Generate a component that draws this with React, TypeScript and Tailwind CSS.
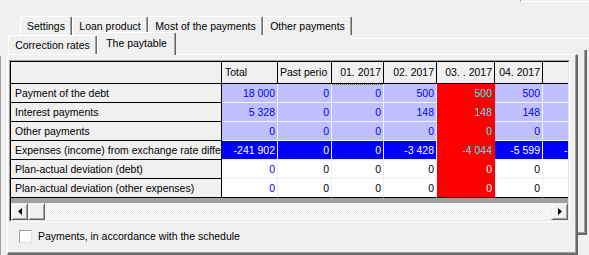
import React from "react";

type Kind = "lav" | "blue" | "white";

interface Row {
  label: string;
  total: string;
  vals: string[];
  partial?: string;
  kind: Kind;
}

const rows: Row[] = [
  { label: "Payment of the debt", total: "18 000", vals: ["0", "0", "500", "500", "500"], kind: "lav" },
  { label: "Interest payments", total: "5 328", vals: ["0", "0", "148", "148", "148"], kind: "lav" },
  { label: "Other payments", total: "0", vals: ["0", "0", "0", "0", "0"], kind: "lav" },
  {
    label: "Expenses (income) from exchange rate differences",
    total: "-241 902",
    vals: ["0", "0", "-3 428", "-4 044", "-5 599"],
    partial: "-5 599",
    kind: "blue",
  },
  { label: "Plan-actual deviation (debt)", total: "0", vals: ["0", "0", "0", "0", "0"], kind: "white" },
  { label: "Plan-actual deviation (other expenses)", total: "0", vals: ["0", "0", "0", "0", "0"], kind: "white" },
];

// widths of Past perio, 01, 02, 03, 04 (each includes its right grid line)
const colW = ["w-[54px]", "w-[52px]", "w-[53px]", "w-[58px]", "w-[48px]"];
const RED = 3;

const headers = [
  { text: "Past perio", cls: "justify-start pl-[2px]" },
  { text: "01. 2017", cls: "justify-end pr-[2px]" },
  { text: "02. 2017", cls: "justify-end pr-[2px]" },
  { text: "03. . 2017", cls: "justify-end pr-[2px]" },
  { text: "04. 2017", cls: "justify-end pr-[2px]" },
];

const fill = (kind: Kind, red: boolean, total: boolean) => {
  if (red) return kind === "white" ? "bg-[#ff0000] border-[#ff0000] text-white" : "bg-[#ff0000] border-[#ff0000] text-[#00ffff]";
  if (kind === "lav") return "bg-[#c0c0ff] border-[#f4f4ff] text-[#0000ff]";
  if (kind === "blue") return "bg-[#0000ff] border-[#f0f0f0] text-white";
  return total ? "bg-white border-[#f0f0f0] text-[#0000ff]" : "bg-white border-[#f0f0f0] text-black";
};

const Tab = ({ label, w, selected }: { label: string; w: string; selected?: boolean }) => (
  <div
    className={`${w} flex items-center justify-center rounded-t-[2px] border-l border-t border-white border-r border-r-[#696969] shadow-[inset_-1px_0_0_#a0a0a0] bg-[#f0f0f0] ${
      selected ? "relative z-10 h-[23px] -mb-px pb-[2px]" : "h-[19px]"
    }`}
  >
    {label}
  </div>
);

const Arrow = ({ dir }: { dir: "left" | "right" }) => (
  <div className="w-[17px] h-[17px] flex items-center justify-center bg-[#f0f0f0] border border-[#f0f0f0] border-r-[#696969] border-b-[#696969] shadow-[inset_1px_1px_0_#fff,inset_-1px_-1px_0_#a0a0a0]">
    <svg width="4" height="7" viewBox="0 0 4 7">
      {dir === "left" ? <path d="M4 0 L0 3.5 L4 7 Z" fill="#000" /> : <path d="M0 0 L4 3.5 L0 7 Z" fill="#000" />}
    </svg>
  </div>
);

const App = () => {
  return (
    <div className="relative w-[589px] h-[255px] overflow-hidden bg-[#f0f0f0] text-[10.5px] leading-none text-black font-['Liberation_Sans',Arial,sans-serif]">
      {/* windows behind */}
      <div className="absolute top-0 left-[520px] w-[69px] h-[2px] border-l border-b border-[#a0a0a0] border-b-white" />
      <div className="absolute top-[38px] left-[351px] w-[238px] h-px bg-white" />
      <div className="absolute top-[50px] left-[578px] w-[9px] h-[185px] border-r-2 border-b-2 border-r-[#696969] border-b-[#696969] shadow-[inset_-1px_-1px_0_#a0a0a0]" />
      <div className="absolute top-[56px] left-0 bottom-0 w-px bg-[#a0a0a0]" />

      {/* tab rows */}
      <div className="flex pl-[20px] pt-[16px] h-[35px]">
        <Tab label="Settings" w="w-[52px]" />
        <Tab label="Loan product" w="w-[76px]" />
        <Tab label="Most of the payments" w="w-[115px]" />
        <Tab label="Other payments" w="w-[89px]" />
      </div>
      <div className="flex items-end pl-[8px] h-[19px]">
        <Tab label="Correction rates" w="w-[89px]" />
        <Tab label="The paytable" w="w-[79px]" selected />
      </div>

      {/* tab page */}
      <div className="ml-[7px] w-[571px] h-[201px] border-l border-t border-white border-r-2 border-b-2 border-r-[#696969] border-b-[#696969] shadow-[inset_-1px_-1px_0_#a0a0a0] flex flex-col">
        <div className="ml-px mt-[5px] w-[561px] h-[162px] border border-[#a0a0a0] border-r-white border-b-white">
          <div className="w-full h-full border border-black border-r-[#e3e3e3] border-b-[#e3e3e3] flex flex-col overflow-hidden">
            {/* header */}
            <div className="flex h-[22px] border-b border-black bg-[#f0f0f0] shrink-0">
              <div className="w-[211px] border-r border-black" />
              <div className="w-[56px] border-r border-black flex items-center pl-[3px]">Total</div>
              {headers.map((h, i) => (
                <div
                  key={h.text}
                  className={`${colW[i]} border-r border-black flex items-center overflow-hidden whitespace-nowrap ${h.cls}`}
                >
                  {h.text}
                </div>
              ))}
              <div className="flex-1" />
            </div>

            {/* body */}
            {rows.map((r, ri) => {
              const last = ri === rows.length - 1;
              return (
                <div key={r.label} className="flex h-[19px] shrink-0">
                  <div
                    className={`w-[211px] border-r border-b border-black bg-[#f0f0f0] flex items-center pl-[4px] overflow-hidden whitespace-nowrap`}
                  >
                    {r.label}
                  </div>
                  <div
                    className={`w-[56px] border-r border-b flex items-center justify-end pr-[2px] ${fill(r.kind, false, true)} ${
                      last ? "border-b-black" : ""
                    }`}
                  >
                    {r.total}
                  </div>
                  {r.vals.map((v, i) => (
                    <div
                      key={i}
                      className={`${colW[i]} relative border-r border-b flex items-center justify-end pr-[2px] ${fill(
                        r.kind,
                        i === RED,
                        false
                      )} ${last ? "border-b-black" : ""}`}
                    >
                      {ri === 0 && i === 1 && (
                        <div className="absolute left-0 right-0 top-0 border-t border-dotted border-[#6b6b00]" />
                      )}
                      {v}
                    </div>
                  ))}
                  <div
                    className={`flex-1 border-b flex items-center pl-[21px] overflow-hidden whitespace-nowrap ${fill(
                      r.kind,
                      false,
                      false
                    )} ${last ? "border-b-black" : ""}`}
                  >
                    {r.partial ?? ""}
                  </div>
                </div>
              );
            })}

            <div className="h-[5px] bg-[#a0a0a0] shrink-0" />

            {/* horizontal scrollbar */}
            <div className="flex h-[17px] shrink-0 bg-[image:repeating-conic-gradient(#ffffff_0_25%,#ececec_0_50%)] bg-[length:2px_2px]">
              <Arrow dir="left" />
              <div className="w-[17px] h-[17px] bg-[#f0f0f0] border border-[#f0f0f0] border-r-[#696969] border-b-[#696969] shadow-[inset_1px_1px_0_#fff,inset_-1px_-1px_0_#a0a0a0]" />
              <div className="flex-1" />
              <Arrow dir="right" />
            </div>
          </div>
        </div>

        {/* checkbox */}
        <label className="flex items-center ml-[11px] mt-[8px] gap-[6px]">
          <span className="w-[13px] h-[13px] bg-white border border-[#a0a0a0] border-r-[#e3e3e3] border-b-[#e3e3e3]" />
          <span>Payments, in accordance with the schedule</span>
        </label>
      </div>
    </div>
  );
};

export default App;
